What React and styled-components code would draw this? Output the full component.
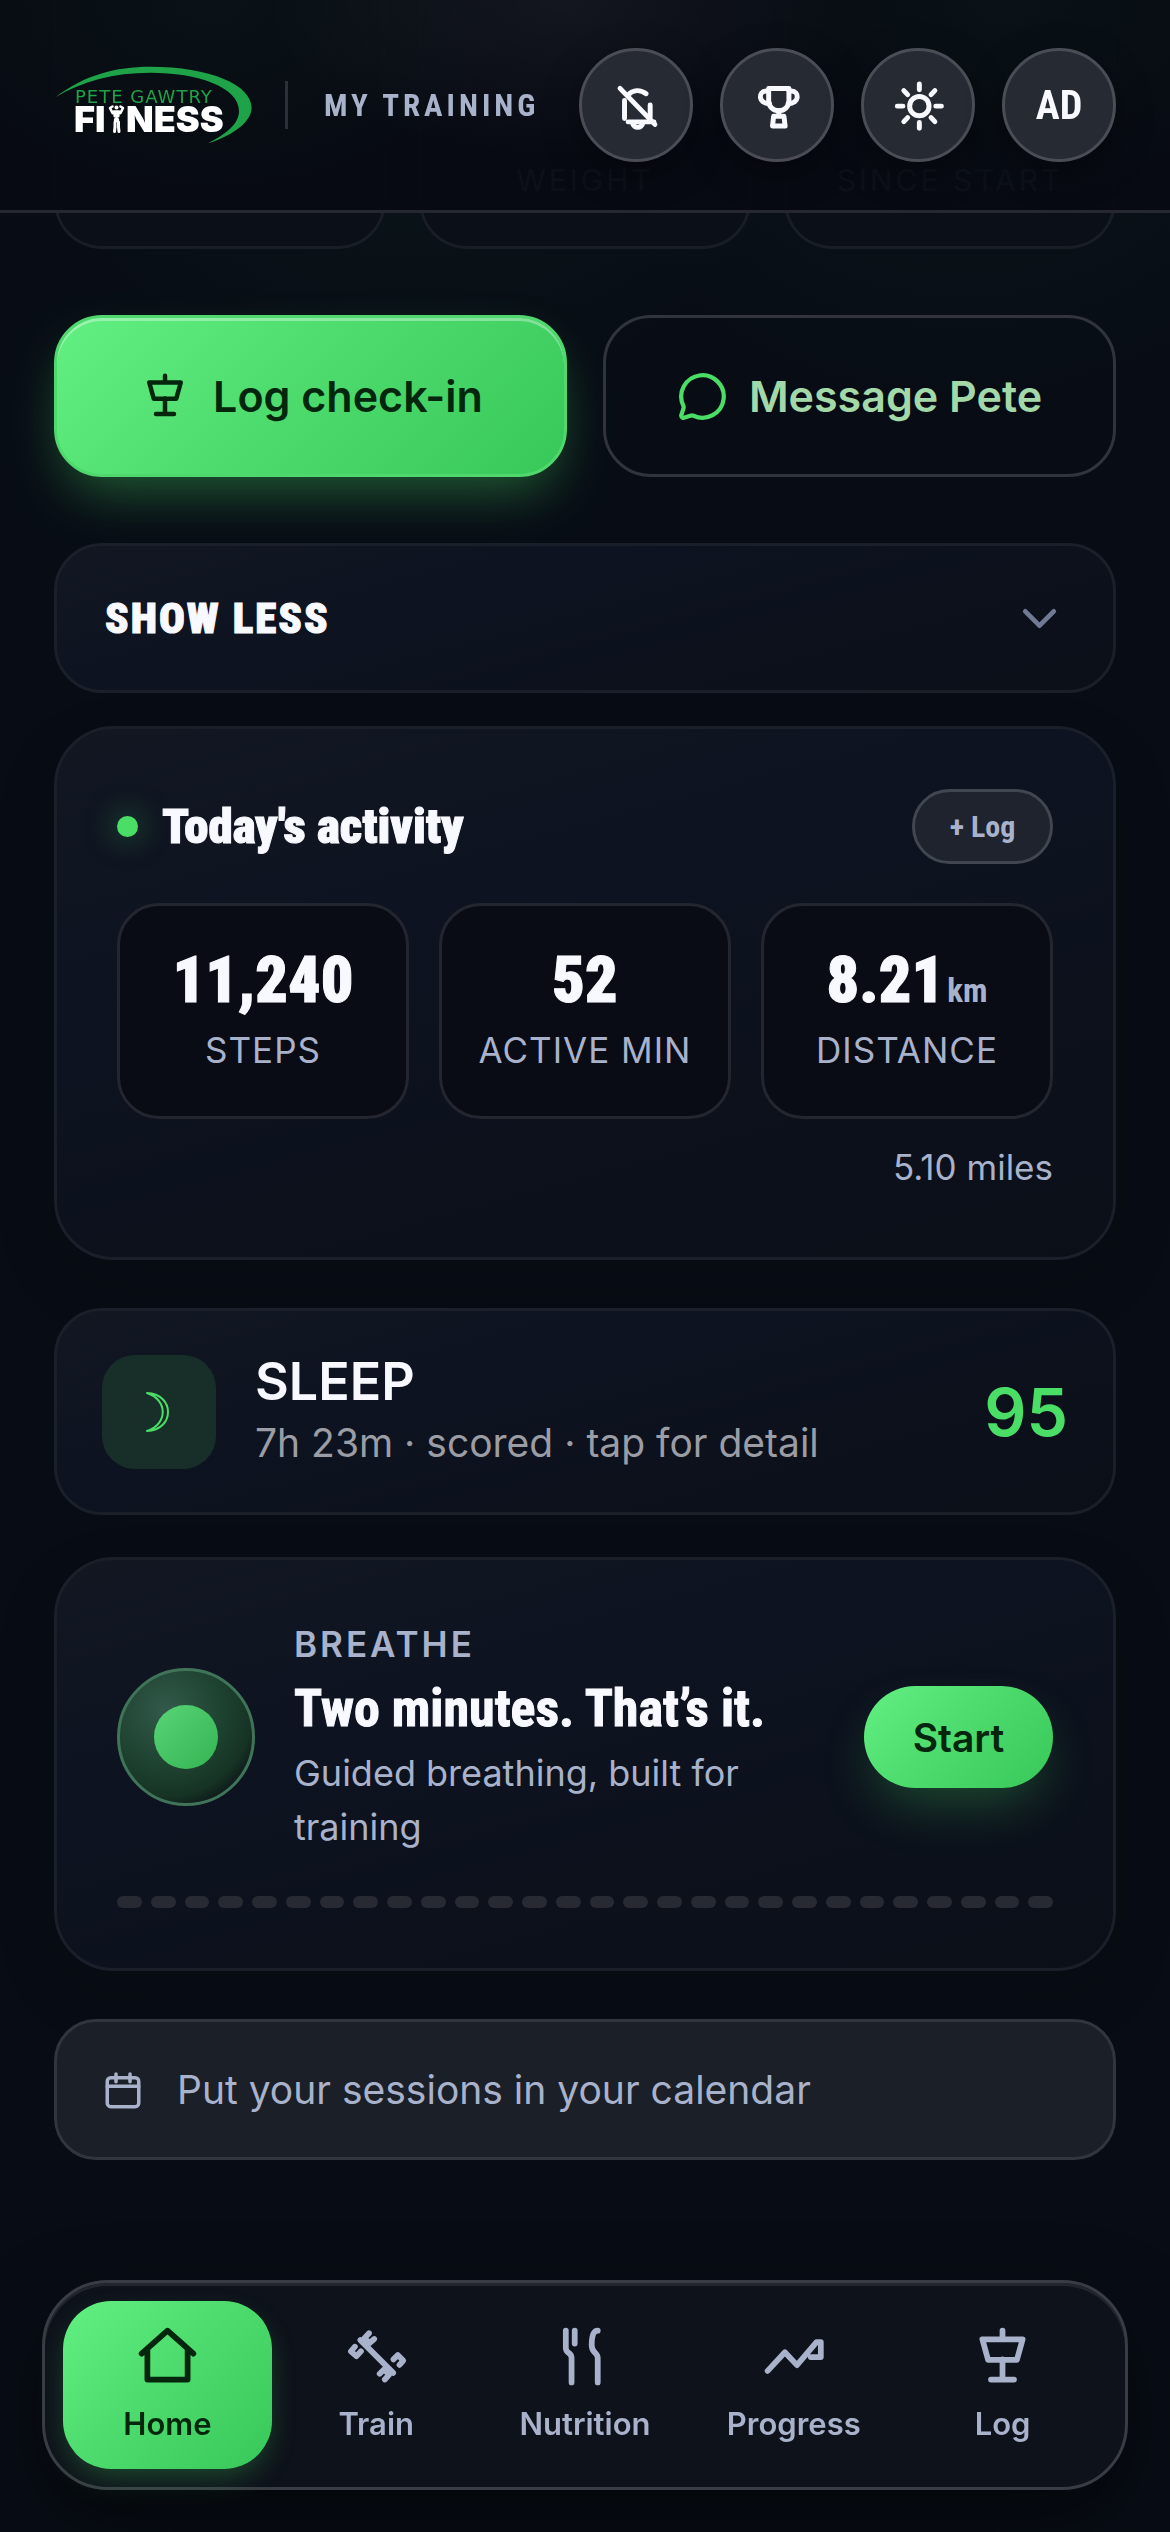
import React from 'react'
import styled, { createGlobalStyle, css } from 'styled-components'
import { MessageCircle, ChevronDown } from 'lucide-react'

const stats = [
  { value: '11,240', label: 'Steps' },
  { value: '52', label: 'Active min' },
  { value: '8.21', unit: 'km', label: 'Distance' },
]

const tabs = [
  { label: 'Home', icon: 'home', active: true },
  { label: 'Train', icon: 'train' },
  { label: 'Nutrition', icon: 'nutrition' },
  { label: 'Progress', icon: 'progress' },
  { label: 'Log', icon: 'log' },
]

const icons = {
  home: <path d="M3 11l9-8 9 8M5 9.500v10.500h14V9.500" />,
  train: (
    <>
      <path d="M6.400 6.300 17.800 17.700" />
      <path d="M9.400 3.900 7.800 5.600 9.600 7.300 11.200 5.900" />
      <path d="M4.500 8.600 3.100 10.200 5 11.900 6.600 10.200" />
      <path d="M17.900 13 19.400 11.500 21.300 13.400 20 14.900" />
      <path d="M13.100 18 14.600 16.500 16.400 18.300 14.900 20" />
    </>
  ),
  nutrition: (
    <>
      <path d="M5.500 3v6c0 2 2 1.500 2 3.500V21" />
      <path d="M8.600 3v4.500" />
      <path d="M16.600 3c-1.600 0-2.100 2-2.100 5s2.100 2.500 2.100 4.500V21" />
    </>
  ),
  progress: <path d="M3 17l6-6.500 4.200 4.500 6.800-8h1.500v5.200H18" />,
  log: <path d="M12 3v3M5 6h14l-2 7.200H7zM12 13v7M8 20h8" />,
  bellOff: (
    <>
      <path d="M4.900 4.600 20.400 20.600" />
      <path d="M6.900 10v8M8.400 7.600c2.300-2.500 5.500-2.600 8.100-.6M18.300 12v5.500M8.500 19.500h11.500" />
      <path d="M10.500 20c.4 2.600 4.100 2.600 4.500 0" />
    </>
  ),
  trophy: (
    <>
      <path d="M8.300 4.700h9v5.500c0 2.700-2.200 4.300-4.500 4.300s-4.500-1.600-4.500-4.300z" />
      <path d="M8.300 5.800H7.200c-3.700 0-3.700 5.600 1.500 5.600M17.300 5.800h1.100c3.700 0 3.700 5.600-1.500 5.600" />
      <path d="M12.800 14.500V17M10.500 17h4.600l.5 4.300H10z" />
    </>
  ),
  sun: (
    <>
      <circle cx="12.600" cy="12.500" r="4.300" />
      <path d="M12.600 2.700v2.500M12.600 19.800v2.500M2.800 12.500h2.500M19.900 12.500h2.500M5.700 5.600l1.700 1.800M17.800 17.600l1.700 1.800M19.500 5.600l-1.700 1.800M7.400 17.600l-1.700 1.800" />
    </>
  ),
  calendar: (
    <>
      <rect x="3" y="5" width="18" height="16.500" rx="2" />
      <path d="M3 9.800h18M8 2.800v4.500M16 2.800v4.500" />
    </>
  ),
}

const Icon = ({ name, size }) => (
  <IconSvg viewBox="0 0 24 24" $size={size} aria-hidden="true">
    {icons[name]}
  </IconSvg>
)

const Logo = () => (
  <LogoSvg viewBox="0 0 198 80" role="img" aria-label="Pete Gawtry Fitness">
    <path
      fill="#1fa348"
      d="M1.500 32.300C30 10 62 1.700 96 1.700c60 0 101.600 18 101.600 41 0 13-16.600 27.300-43.600 35.600 18-9.300 31-19.300 31-32.300C185 22 144 7.700 96 7.700 60 7.700 28 16 1.500 32.300z"
    />
    <LogoTop x="21" y="38">PETE GAWTRY</LogoTop>
    <LogoBottom x="20" y="67">FI</LogoBottom>
    <LogoBottom x="72" y="67">NESS</LogoBottom>
    <g fill="none" stroke="#fff" strokeLinecap="round" strokeLinejoin="round">
      <path strokeWidth="2.600" d="M58.500 48 56 43 58.500 41.500M66.500 48l2.500-5-2.500-1.500" />
      <path strokeWidth="4.500" d="M60 47.500h5M61.500 50.500h2M62 55h1" />
      <path strokeWidth="3" d="M61 57v5l-.5 4.500M64.500 57v5l.5 4.500" />
    </g>
    <circle cx="62.500" cy="42.500" r="2" fill="#fff" />
  </LogoSvg>
)

const App = () => (
  <>
    <GlobalStyle />
    <Header>
      <Logo />
      <Divider />
      <HeaderTitle>My Training</HeaderTitle>
      <HeaderActions>
        <RoundButton aria-label="Notifications off"><Icon name="bellOff" size={54} /></RoundButton>
        <RoundButton aria-label="Awards"><Icon name="trophy" size={54} /></RoundButton>
        <RoundButton aria-label="Light theme"><Icon name="sun" size={54} /></RoundButton>
        <RoundButton>AD</RoundButton>
      </HeaderActions>
    </Header>

    <Main>
      <SummaryGrid>
        <SummaryCard />
        <SummaryCard>Weight</SummaryCard>
        <SummaryCard>Since start</SummaryCard>
      </SummaryGrid>

      <ActionRow>
        <ActionButton $primary><Icon name="log" size={54} />Log check-in</ActionButton>
        <ActionButton><MessageIcon size={51} strokeWidth={2} />Message Pete</ActionButton>
      </ActionRow>

      <ShowLess>
        Show less
        <ChevronDown size={57} strokeWidth={2} />
      </ShowLess>

      <ActivityCard>
        <ActivityHeader>
          <LiveDot />
          <ActivityTitle>Today's activity</ActivityTitle>
          <LogButton>+ Log</LogButton>
        </ActivityHeader>
        <StatGrid>
          {stats.map(({ value, unit, label }) => (
            <Stat key={label}>
              <StatValue>{value}{unit && <StatUnit>{unit}</StatUnit>}</StatValue>
              <StatLabel>{label}</StatLabel>
            </Stat>
          ))}
        </StatGrid>
        <Miles>5.10 miles</Miles>
      </ActivityCard>

      <SleepCard>
        <SleepTile>
          <svg viewBox="0 0 30 42" width="30" height="42" aria-hidden="true">
            <path fill="none" stroke="#4ade66" strokeWidth="2" strokeLinejoin="round" d="M3 2C31 3 31 39 3 40 24 33 24 9 3 2z" />
          </svg>
        </SleepTile>
        <SleepText>
          <SleepTitle>SLEEP</SleepTitle>
          <SleepDetail>7h 23m · scored · tap for detail</SleepDetail>
        </SleepText>
        <SleepScore>95</SleepScore>
      </SleepCard>

      <BreatheCard>
        <BreatheRow>
          <Orb><OrbCore /></Orb>
          <BreatheText>
            <Eyebrow>Breathe</Eyebrow>
            <BreatheTitle>Two minutes. That’s it.</BreatheTitle>
            <BreatheDetail>Guided breathing, built for training</BreatheDetail>
          </BreatheText>
          <StartButton>Start</StartButton>
        </BreatheRow>
        <Dashes>
          {Array.from({ length: 28 }, (_, i) => <Dash key={i} />)}
        </Dashes>
      </BreatheCard>

      <CalendarButton><Icon name="calendar" size={42} />Put your sessions in your calendar</CalendarButton>
    </Main>

    <TabBar>
      {tabs.map(({ label, icon, active }) => (
        <Tab key={label} href={`#${icon}`} $active={active}>
          <Icon name={icon} size={69} />
          {label}
        </Tab>
      ))}
    </TabBar>
  </>
)

export default App

const condensed = '"Roboto Condensed", "Liberation Sans Narrow", sans-serif'
const green = 'linear-gradient(135deg, #63f083 0%, #4edc6e 45%, #38c759 100%)'

const GlobalStyle = createGlobalStyle`
  * {
    box-sizing: border-box;
  }
  body {
    margin: 0;
    min-height: 100vh;
    color: #f8f9fe;
    font-family: Inter, sans-serif;
    background:
      radial-gradient(420px 400px at 36% 0, rgba(20, 60, 40, 0.25), transparent),
      radial-gradient(420px 400px at 82% 0, rgba(20, 60, 40, 0.2), transparent),
      #080d15;
  }
  button {
    margin: 0;
    padding: 0;
    font: inherit;
    color: inherit;
    background: none;
    border: none;
    cursor: pointer;
  }
  h2, p {
    margin: 0;
  }
`

const panel = css`
  background: linear-gradient(165deg, #121722 0%, #0d1320 35%, #0b0f18 100%);
  border: 3px solid #1b1f29;
`

const display = css`
  font-family: ${condensed};
  font-weight: 900;
  -webkit-text-stroke: 1px currentColor;
`

const IconSvg = styled.svg`
  flex: none;
  width: ${p => p.$size}px;
  height: ${p => p.$size}px;
  fill: none;
  stroke: currentColor;
  stroke-width: 2;
  stroke-linecap: round;
  stroke-linejoin: round;
`

const Header = styled.header`
  position: fixed;
  z-index: 2;
  top: 0;
  left: 0;
  right: 0;
  display: flex;
  align-items: center;
  height: 213px;
  padding: 0 54px;
  border-bottom: 3px solid #25282f;
  background:
    radial-gradient(300px 160px at 48% 0, rgba(255, 255, 255, 0.05), transparent),
    radial-gradient(300px 200px at 18% 0, rgba(30, 90, 60, 0.1), transparent),
    radial-gradient(300px 200px at 86% 0, rgba(30, 90, 60, 0.1), transparent),
    rgba(7, 10, 19, 0.97);
`

const LogoSvg = styled.svg`
  flex: none;
  width: 198px;
  height: 80px;
`

const LogoTop = styled.text`
  font-family: "DejaVu Sans", sans-serif;
  font-size: 18px;
  letter-spacing: 1px;
  fill: #1fa348;
`

const LogoBottom = styled.text`
  font-family: Inter, sans-serif;
  font-size: 36px;
  font-weight: 900;
  fill: #fff;
`

const Divider = styled.div`
  width: 3px;
  height: 48px;
  margin: 0 36px 0 33px;
  background: #2c2f37;
`

const HeaderTitle = styled.div`
  font-family: ${condensed};
  font-size: 31px;
  font-weight: 700;
  letter-spacing: 4px;
  text-transform: uppercase;
  white-space: nowrap;
  color: #a9b2cb;
`

const HeaderActions = styled.div`
  display: flex;
  gap: 27px;
  margin-left: auto;
`

const RoundButton = styled.button`
  display: flex;
  align-items: center;
  justify-content: center;
  width: 114px;
  height: 114px;
  border: 3px solid #4a4d55;
  border-radius: 50%;
  font-family: ${condensed};
  font-size: 40px;
  font-weight: 700;
  background: #262a32;
  box-shadow: 0 12px 36px rgba(0, 0, 0, 0.35);

  svg {
    stroke-width: 2.2;
  }
`

const Main = styled.main`
  display: flex;
  flex-direction: column;
  padding: 0 54px 372px;
`

const SummaryGrid = styled.div`
  display: grid;
  grid-template-columns: repeat(3, 1fr);
  gap: 33px;
`

const SummaryCard = styled.div`
  display: flex;
  align-items: flex-end;
  justify-content: center;
  height: 249px;
  padding-bottom: 48px;
  border: 3px solid #191d25;
  border-top: none;
  border-radius: 0 0 48px 48px;
  font-size: 30px;
  line-height: 36px;
  letter-spacing: 3px;
  text-transform: uppercase;
  color: #a9b2cb;
  background: #0b0f18;
`

const ActionRow = styled.div`
  display: grid;
  grid-template-columns: 1fr 1fr;
  gap: 36px;
  margin-top: 66px;
`

const ActionButton = styled.button`
  display: flex;
  align-items: center;
  justify-content: center;
  gap: 21px;
  height: 162px;
  border: 3px solid #31343d;
  border-radius: 48px;
  font-size: 43px;
  font-weight: 600;
  color: #a3d9a8;

  ${p => p.$primary && css`
    border-color: #50d76d;
    color: #03260c;
    background: ${green};
    box-shadow: inset 0 3px 0 rgba(255, 255, 255, 0.35), 0 24px 54px -12px rgba(74, 222, 102, 0.4);
  `}
`

const MessageIcon = styled(MessageCircle)`
  color: #4ade66;
`

const ShowLess = styled.button`
  ${panel}
  ${display}
  display: flex;
  align-items: center;
  justify-content: space-between;
  height: 150px;
  margin-top: 66px;
  padding: 0 45px 0 48px;
  border-radius: 48px;
  font-size: 43px;
  letter-spacing: 2px;
  text-transform: uppercase;

  svg {
    color: #717a94;
  }
`

const ActivityCard = styled.section`
  ${panel}
  margin-top: 33px;
  padding: 60px;
  border-radius: 60px;
  box-shadow: 0 24px 60px rgba(0, 0, 0, 0.15);
`

const ActivityHeader = styled.div`
  display: flex;
  align-items: center;
  height: 75px;
`

const LiveDot = styled.span`
  width: 21px;
  height: 21px;
  border-radius: 50%;
  background: #4ade66;
  box-shadow: 0 0 30px rgba(74, 222, 102, 0.5);
`

const ActivityTitle = styled.h2`
  ${display}
  margin-left: 24px;
  font-size: 49px;
`

const LogButton = styled.button`
  width: 141px;
  height: 75px;
  margin-left: auto;
  border: 3px solid #42464f;
  border-radius: 38px;
  font-family: ${condensed};
  font-size: 30px;
  font-weight: 700;
  color: #a9b2cb;
  background: #1e232d;
`

const StatGrid = styled.div`
  display: grid;
  grid-template-columns: repeat(3, 1fr);
  gap: 30px;
  margin-top: 39px;
`

const Stat = styled.div`
  height: 216px;
  padding-top: 39px;
  border: 3px solid #23262f;
  border-radius: 42px;
  text-align: center;
  background: #090c15;
`

const StatValue = styled.div`
  ${display}
  height: 72px;
  font-size: 64px;
  line-height: 72px;
`

const StatUnit = styled.span`
  margin-left: 3px;
  font-size: 33px;
  font-weight: 700;
  line-height: 36px;
  color: #a9b2cb;
  -webkit-text-stroke: 0;
`

const StatLabel = styled.div`
  margin-top: 6px;
  font-size: 35px;
  line-height: 54px;
  letter-spacing: 1px;
  text-transform: uppercase;
  color: #a9b2cb;
`

const Miles = styled.p`
  margin: 21px 0 3px;
  font-size: 35px;
  line-height: 54px;
  text-align: right;
  color: #a9b2cb;
`

const SleepCard = styled.section`
  ${panel}
  display: flex;
  align-items: center;
  gap: 39px;
  height: 207px;
  margin-top: 48px;
  padding: 0 45px;
  border-radius: 48px;
`

const SleepTile = styled.div`
  display: flex;
  align-items: center;
  justify-content: center;
  width: 114px;
  height: 114px;
  border-radius: 33px;
  background: #182f29;
`

const SleepText = styled.div`
  flex: 1;
`

const SleepTitle = styled.h2`
  font-size: 52px;
  font-weight: 600;
  line-height: 57px;
`

const SleepDetail = styled.p`
  margin-top: 6px;
  font-size: 39px;
  line-height: 54px;
  color: #9b9da5;
`

const SleepScore = styled.div`
  font-size: 66px;
  font-weight: 600;
  color: #4ade66;
`

const BreatheCard = styled.section`
  ${panel}
  margin-top: 42px;
  padding: 60px;
  border-radius: 60px;
  box-shadow: 0 24px 60px rgba(0, 0, 0, 0.15);
`

const BreatheRow = styled.div`
  display: flex;
  align-items: center;
  gap: 39px;
`

const Orb = styled.div`
  display: flex;
  flex: none;
  align-items: center;
  justify-content: center;
  width: 138px;
  height: 138px;
  border: 3px solid #3f7458;
  border-radius: 50%;
  background: radial-gradient(circle at 35% 30%, #32594a 0%, #1e4230 45%, #163324 68%, #0a0f18 85%);
`

const OrbCore = styled.div`
  width: 64px;
  height: 64px;
  border-radius: 50%;
  background: linear-gradient(135deg, #58d576, #35b454);
`

const BreatheText = styled.div`
  flex: 1;
`

const Eyebrow = styled.p`
  font-size: 35px;
  font-weight: 600;
  line-height: 48px;
  letter-spacing: 3px;
  text-transform: uppercase;
  color: #a9b2cb;
`

const BreatheTitle = styled.h2`
  ${display}
  margin: 6px 0 3px;
  font-size: 52px;
  font-weight: 700;
  line-height: 69px;
  white-space: nowrap;
`

const BreatheDetail = styled.p`
  font-size: 36px;
  line-height: 54px;
  color: #a9b2cb;
`

const StartButton = styled.button`
  width: 189px;
  height: 102px;
  border-radius: 51px;
  font-size: 39px;
  font-weight: 600;
  color: #03260c;
  background: ${green};
  box-shadow: 0 24px 54px -12px rgba(74, 222, 102, 0.3);
`

const Dashes = styled.div`
  display: flex;
  gap: 9px;
  margin-top: 42px;
`

const Dash = styled.span`
  flex: 1;
  height: 12px;
  border-radius: 6px;
  background: #272a33;
`

const CalendarButton = styled.button`
  display: flex;
  align-items: center;
  gap: 33px;
  height: 141px;
  margin-top: 48px;
  padding: 0 45px;
  border: 3px solid #31353d;
  border-radius: 42px;
  font-size: 39px;
  color: #a9b2cb;
  background: #1b1f27;
`

const TabBar = styled.nav`
  position: fixed;
  z-index: 2;
  left: 42px;
  right: 42px;
  bottom: 42px;
  display: grid;
  grid-template-columns: repeat(5, 1fr);
  padding: 18px;
  border: 3px solid #393c44;
  border-radius: 66px;
  background: #0e121a;
  box-shadow: inset 0 3px 0 #22252e, 0 30px 75px rgba(0, 0, 0, 0.5);
`

const Tab = styled.a`
  display: flex;
  flex-direction: column;
  align-items: center;
  gap: 12px;
  height: 168px;
  padding-top: 21px;
  border-radius: 48px;
  font-size: 31px;
  font-weight: 600;
  line-height: 42px;
  text-decoration: none;
  color: #a9b2cb;

  ${p => p.$active && css`
    color: #03260c;
    background: ${green};
    box-shadow: 0 12px 30px -6px rgba(74, 222, 102, 0.3);
  `}
`
